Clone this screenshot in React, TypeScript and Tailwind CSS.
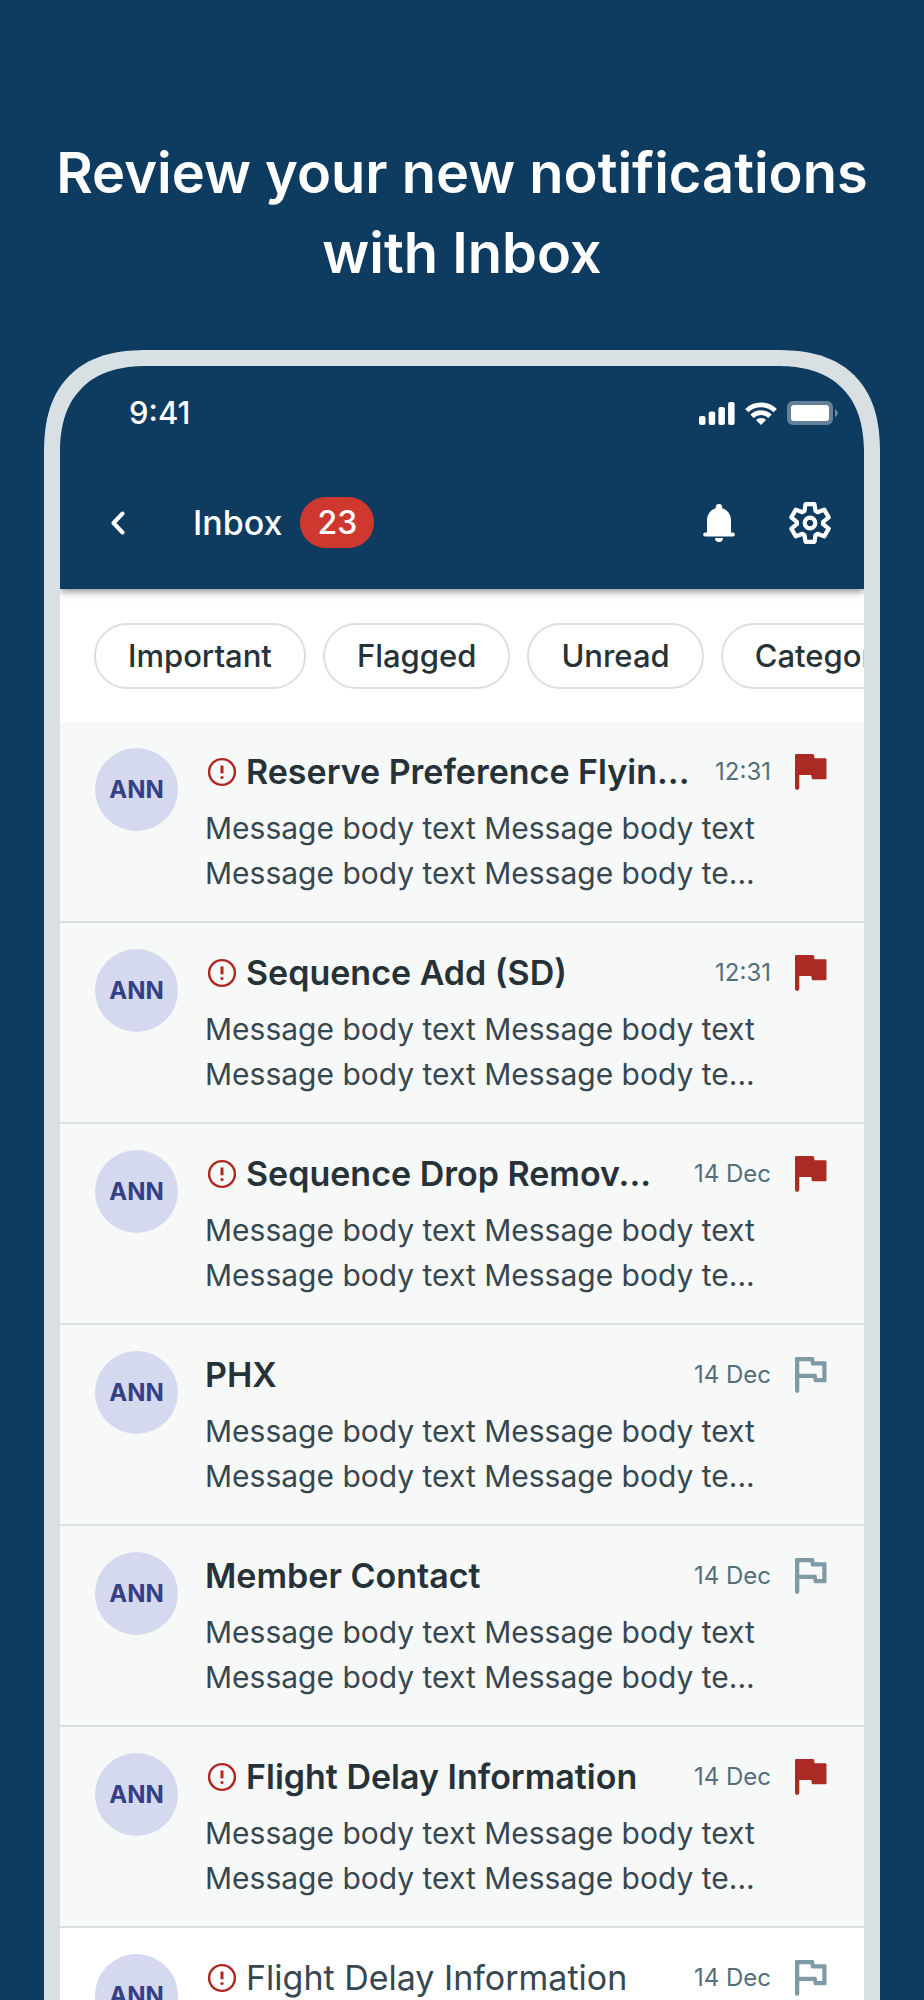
import React from 'react';

type Message = {
  title: string;
  date: string;
  important: boolean;
  flagged: boolean;
  unread: boolean;
};

const filters = ['Important', 'Flagged', 'Unread', 'Category'];

const messages: Message[] = [
  { title: 'Reserve Preference Flyin...', date: '12:31', important: true, flagged: true, unread: true },
  { title: 'Sequence Add (SD)', date: '12:31', important: true, flagged: true, unread: true },
  { title: 'Sequence Drop Remov...', date: '14 Dec', important: true, flagged: true, unread: true },
  { title: 'PHX', date: '14 Dec', important: false, flagged: false, unread: true },
  { title: 'Member Contact', date: '14 Dec', important: false, flagged: false, unread: true },
  { title: 'Flight Delay Information', date: '14 Dec', important: true, flagged: true, unread: true },
  { title: 'Flight Delay Information', date: '14 Dec', important: true, flagged: false, unread: false },
];

function SignalIcon() {
  return (
    <svg className="h-[23px] w-9" viewBox="0 0 36 23" fill="currentColor" aria-hidden="true">
      <rect x="0" y="14" width="6.5" height="9" rx="2" />
      <rect x="9.7" y="9.5" width="6.5" height="13.5" rx="2" />
      <rect x="19.4" y="5" width="6.5" height="18" rx="2" />
      <rect x="29.1" y="0" width="6.5" height="23" rx="2" />
    </svg>
  );
}

function WifiIcon() {
  return (
    <svg className="h-[23px] w-8" viewBox="0 0 32 23" aria-hidden="true">
      <g fill="none" stroke="currentColor" strokeWidth="4.8">
        <path d="M1.8 8.6a20.4 20.4 0 0 1 28.4 0" />
        <path d="M7 14.2a13 13 0 0 1 18 0" />
      </g>
      <path d="M16 23l-5-5a7.4 7.4 0 0 1 10 0z" fill="currentColor" />
    </svg>
  );
}

function BatteryIcon() {
  return (
    <svg className="h-6 w-[51px]" viewBox="0 0 51 24" fill="currentColor" aria-hidden="true">
      <path
        opacity="0.36"
        fillRule="evenodd"
        d="M6 0h34a6 6 0 0 1 6 6v12a6 6 0 0 1-6 6H6a6 6 0 0 1-6-6V6a6 6 0 0 1 6-6zm0 4a2 2 0 0 0-2 2v12a2 2 0 0 0 2 2h34a2 2 0 0 0 2-2V6a2 2 0 0 0-2-2z"
      />
      <rect x="4" y="4" width="38" height="16" rx="2.5" />
      <path opacity="0.4" d="M48 8c3.6 1.4 3.6 6.6 0 8z" />
    </svg>
  );
}

function BellIcon() {
  return (
    <svg className="h-[38px] w-8" viewBox="0 0 32 38" fill="currentColor" aria-hidden="true">
      <path d="M16 0a3.2 3.2 0 0 1 3.2 3.2v1A12 12 0 0 1 28 15.8V28.4h1.8a2 2 0 0 1 0 4.1H2.2a2 2 0 0 1 0-4.1H4V15.8A12 12 0 0 1 12.8 4.2v-1A3.2 3.2 0 0 1 16 0z" />
      <path d="M12 33.9h8a4 4 0 0 1-8 0z" />
    </svg>
  );
}

function GearIcon() {
  return (
    <svg
      className="h-[42px] w-[42px]"
      viewBox="-21 -21 42 42"
      fill="none"
      stroke="currentColor"
      strokeWidth="4.2"
      strokeLinejoin="round"
      aria-hidden="true"
    >
      <path d="M-4.5-18.8H4.5L5.5-12 7.6-10.8 14.2-13.4 18.7-5.6 13.1-1.2V1.2L18.7 5.6 14.2 13.4 7.6 10.8 5.5 12 4.5 18.8H-4.5L-5.5 12-7.6 10.8-14.2 13.4-18.7 5.6-13.1 1.2V-1.2L-18.7-5.6-14.2-13.4-7.6-10.8-5.5-12z" />
      <circle r="5.3" />
    </svg>
  );
}

function AlertIcon() {
  return (
    <svg className="h-[34px] w-[34px] shrink-0 text-[#b0271f]" viewBox="0 0 34 34" role="img" aria-label="Important">
      <circle cx="17" cy="17" r="12.9" fill="none" stroke="currentColor" strokeWidth="2.4" />
      <path d="M17 10.5v7.8" fill="none" stroke="currentColor" strokeWidth="3" />
      <circle cx="17" cy="22.5" r="1.6" fill="currentColor" />
    </svg>
  );
}

function FlagIcon({ flagged }: { flagged: boolean }) {
  return (
    <svg className="h-9 w-8" viewBox="0 0 32 36" fill="currentColor" aria-hidden="true">
      {flagged ? (
        <path d="M1.2 0H17.8a1.2 1.2 0 0 1 1.2 1L19.6 4.3H30.3a1.2 1.2 0 0 1 1.2 1.2V24a1.2 1.2 0 0 1-1.2 1.2H18a1.2 1.2 0 0 1-1.2-1L16.2 21H4.3V33.8a2.1 2.1 0 0 1-4.3 0V1.2A1.2 1.2 0 0 1 1.2 0z" />
      ) : (
        <path
          fillRule="evenodd"
          d="M1.2 0H17.8a1.2 1.2 0 0 1 1.2 1L19.6 4.3H30.3a1.2 1.2 0 0 1 1.2 1.2V24a1.2 1.2 0 0 1-1.2 1.2H20a1.2 1.2 0 0 1-1.2-1L18.2 21H4.3V33.8a2.1 2.1 0 0 1-4.3 0V1.2A1.2 1.2 0 0 1 1.2 0zM4.3 4.2V16.8H20.5a1.2 1.2 0 0 1 1.2 1L22.2 21H27.3V8.5H17.2a1.2 1.2 0 0 1-1.2-1L15.4 4.2z"
        />
      )}
    </svg>
  );
}

function MessageRow({ message }: { message: Message }) {
  return (
    <li
      className={`flex items-start border-b-2 border-[#d9e0e3] pt-[26px] pr-[37px] pb-[25px] pl-[35px] ${
        message.unread ? 'bg-[#f7f9f9]' : 'bg-white'
      }`}
    >
      <span className="flex h-[83px] w-[83px] shrink-0 items-center justify-center rounded-full bg-[#d5d9ef] text-2xl font-bold text-[#353f85]">
        ANN
      </span>
      <div className="ml-[27px] min-w-0 flex-1">
        <div className="flex h-12 items-center">
          {message.important && <AlertIcon />}
          <h2
            className={`flex-1 truncate text-[34px] leading-12 ${message.important ? 'ml-[7px]' : ''} ${
              message.unread ? 'font-semibold text-[#263238]' : 'font-normal text-[#37474f]'
            }`}
          >
            {message.title}
          </h2>
          <time className="ml-4 shrink-0 text-2xl text-[#546e7a]">{message.date}</time>
          <button
            type="button"
            aria-label={message.flagged ? 'Remove flag' : 'Add flag'}
            className={`ml-6 shrink-0 ${message.flagged ? 'text-[#ab2a24]' : 'text-[#7f99a5]'}`}
          >
            <FlagIcon flagged={message.flagged} />
          </button>
        </div>
        <p className="mt-2.5 text-[30px] leading-[45px] whitespace-nowrap text-[#37474f]">
          Message body text Message body text
          <br />
          Message body text Message body te...
        </p>
      </div>
    </li>
  );
}

export default function App() {
  return (
    <main className="flex h-screen flex-col overflow-hidden bg-[#0e3b60] px-11 font-['Inter',sans-serif]">
      <h1 className="mt-[133px] text-center text-[56px] leading-20 font-semibold text-white">
        Review your new notifications
        <br />
        with Inbox
      </h1>

      {/* Phone */}
      <div className="mt-[57px] min-h-0 flex-1 overflow-hidden rounded-t-[104px] border-x-16 border-t-16 border-[#d9e0e3] bg-white [corner-shape:superellipse(1.3)]">
        <header className="relative bg-[#0e3b60] text-white shadow-[0_2px_8px_rgba(0,0,0,0.5)]">
          {/* Status bar */}
          <div className="flex h-[94px] items-center pr-[26px] pl-[69px]">
            <span className="flex-1 text-[31px] font-medium">9:41</span>
            <div className="flex items-center gap-2.5">
              <SignalIcon />
              <WifiIcon />
              <BatteryIcon />
            </div>
          </div>

          {/* App bar */}
          <div className="flex h-[129px] items-center pr-[33px] pb-1 pl-[47px]">
            <button type="button" aria-label="Back">
              <svg className="h-6 w-5" viewBox="0 0 20 24" fill="none" aria-hidden="true">
                <path
                  d="M15.5 2.5 6.5 12l9 9.5"
                  stroke="currentColor"
                  strokeWidth="4"
                  strokeLinecap="round"
                  strokeLinejoin="round"
                />
              </svg>
            </button>
            <h2 className="ml-[66px] text-[34px] font-medium">Inbox</h2>
            <span className="ml-[18px] rounded-full bg-[#cf382e] px-[17px] text-[32px] leading-[51px] font-medium">
              23
            </span>
            <div className="ml-auto flex items-center gap-[54px]">
              <button type="button" aria-label="Notifications">
                <BellIcon />
              </button>
              <button type="button" aria-label="Settings">
                <GearIcon />
              </button>
            </div>
          </div>
        </header>

        {/* Filters */}
        <div className="flex gap-[17px] overflow-hidden pt-[34px] pb-[33px] pl-[34px]">
          {filters.map((filter) => (
            <button
              key={filter}
              type="button"
              className="h-[66px] shrink-0 rounded-full border-2 border-[#d9e0e3] px-8 text-[31px] font-medium text-[#263238]"
            >
              {filter}
            </button>
          ))}
        </div>

        {/* Messages */}
        <ul>
          {messages.map((message, index) => (
            <MessageRow key={index} message={message} />
          ))}
        </ul>
      </div>
    </main>
  );
}
